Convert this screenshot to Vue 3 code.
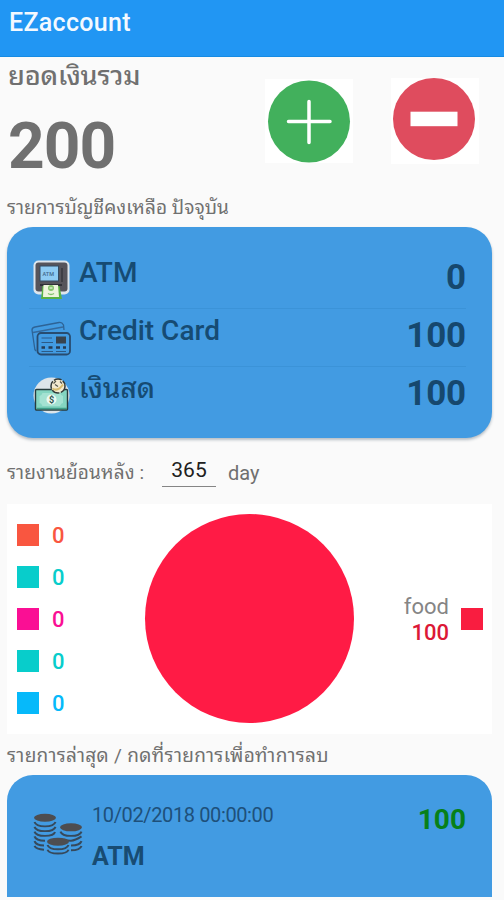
<script setup>
import { ref } from 'vue'

const total = ref(200)
const days = ref('365')

const accounts = ref([
  { icon: 'atm', name: 'ATM', amount: 0 },
  { icon: 'card', name: 'Credit Card', amount: 100 },
  { icon: 'cash', name: 'เงินสด', amount: 100 },
])

const legend = ['tomato', 'turquoise', 'pink', 'turquoise', 'sky']
</script>

<template>
  <div class="page">
    <header class="toolbar">
      <h1>EZaccount</h1>
    </header>

    <section class="summary">
      <div class="total">
        <div class="total-label">ยอดเงินรวม</div>
        <div class="total-value">{{ total }}</div>
      </div>
      <button class="round-btn add">
        <svg viewBox="0 0 88 84" width="88" height="84">
          <rect width="88" height="84" fill="#fff" />
          <circle cx="44" cy="42.5" r="41" fill="#42b05c" />
          <path d="M23.5 42.5H65M44 22.5V63.5" stroke="#fff" stroke-width="3.5" stroke-linecap="round" />
        </svg>
      </button>
      <button class="round-btn remove">
        <svg viewBox="0 0 88 86" width="88" height="86">
          <rect width="88" height="86" fill="#fff" />
          <circle cx="43" cy="41" r="41" fill="#df4c5e" />
          <rect x="19.5" y="33.7" width="47" height="14.5" fill="#fff" />
        </svg>
      </button>
    </section>

    <div class="caption">
      <span class="caption-accounts">รายการบัญชีคงเหลือ ปัจจุบัน</span>
    </div>

    <section class="card accounts">
      <div v-for="a in accounts" :key="a.name" class="account">
        <svg v-if="a.icon === 'atm'" class="icon" viewBox="0 0 40 42">
          <rect x="2.5" y="2.5" width="36" height="34" rx="5" fill="#dde5ec" />
          <rect x="4.5" y="4.5" width="32" height="29" rx="3" fill="#56545b" />
          <rect x="9" y="8" width="18.5" height="15" fill="#8ecbf3" stroke="#344b62" />
          <text x="11.5" y="17.5" font-size="5.5" font-weight="500" fill="#42688a">ATM</text>
          <path d="M31 10V24" stroke="#3e3e45" stroke-width="2" />
          <path d="M9 27H31" stroke="#2f3038" stroke-width="2" />
          <path d="M11.5 28H28.5L31 41H10Z" fill="#5ab243" />
          <path d="M12.5 27H27L28 39H12Z" fill="#edf4dc" />
          <circle cx="20" cy="30" r="3" fill="#84c36c" />
          <path d="M18.5 30H21.5" stroke="#fff" stroke-width="1" />
          <path d="M17 35.5Q20 37.5 23 35.500" stroke="#84c36c" stroke-width="1.5" fill="none" />
        </svg>
        <svg v-else-if="a.icon === 'card'" class="icon" viewBox="0 0 40 42" fill="none">
          <path d="M5 35Q3.5 34 3.5 31L1 14Q1 11.5 4 11L28 6.5Q31 6 32.5 9L33 14" stroke="#2d6396" stroke-width="1.3" />
          <path d="M2 16.5L32 11" stroke="#34699c" stroke-width="1.5" />
          <rect x="6.5" y="17" width="32.5" height="21.5" rx="3.5" fill="#429be2" stroke="#284c70" stroke-width="1.8" />
          <rect x="25" y="20.5" width="10" height="7" fill="#38434e" />
          <path d="M10.5 22H21M10.5 26.5H22M10.5 35.5H22M25 35.5H35" stroke="#2c5b87" stroke-width="1.2" />
          <path d="M10.5 31.5H14M17.5 31.5H21.5M25 31.5H29M32 31.5H35" stroke="#263b53" stroke-width="2.5" />
        </svg>
        <svg v-else class="icon" viewBox="0 0 40 42">
          <circle cx="20.5" cy="21.5" r="18" fill="#dde5ea" />
          <rect x="4.5" y="15.5" width="32" height="20.5" rx="1" fill="#84d5c1" stroke="#273c3e" stroke-width="1.4" />
          <path d="M5.5 34.5H36" stroke="#40a089" stroke-width="1.5" />
          <path d="M11.5 19H29Q30 22 32 22V29Q30 29 29 32H11.5Q10.5 29 8.5 29V22Q10.5 22 11.5 19Z" fill="#a4e2d2" />
          <circle cx="20.500" cy="25.5" r="5" fill="#edf8ef" />
          <text x="18" y="29" font-size="9" font-weight="700" fill="#2b5552">$</text>
          <circle cx="27" cy="12" r="7" fill="#f4ead0" stroke="#333a38" stroke-width="1.5" stroke-dasharray="8 1.5" />
          <path d="M21.5 14.5Q27 18 32 10.500" fill="none" stroke="#d7bd70" stroke-width="2" />
          <path d="M22.5 9.5L25 7M24 10.5L27 12.5M29 7.5L31 9.5" fill="none" stroke="#55564c" stroke-width="1.2" />
        </svg>
        <span class="account-name">{{ a.name }}</span>
        <span class="account-amount">{{ a.amount }}</span>
      </div>
    </section>

    <section class="range">
      <span class="range-label">รายงานย้อนหลัง :</span>
      <input v-model="days" class="range-input">
      <span class="range-unit">day</span>
    </section>

    <section class="chart">
      <ul class="legend">
        <li v-for="(color, i) in legend" :key="i" :class="color">
          <i class="swatch"></i>
          <span>0</span>
        </li>
      </ul>
      <div class="pie"></div>
      <div class="slice">
        <div class="slice-text">
          <span class="slice-name">food</span>
          <span class="slice-value">100</span>
        </div>
        <i class="swatch"></i>
      </div>
    </section>

    <div class="caption">
      <span class="caption-recent">รายการล่าสุด / กดที่รายการเพื่อทำการลบ</span>
    </div>

    <section class="card recent">
      <svg class="coins" viewBox="0 0 50 44" width="50" height="42" preserveAspectRatio="none" fill="none">
        <g stroke="#36495b" stroke-width="2">
          <path d="M1.5 9.5Q3 14 12 14T22.5 9.5M1.5 14.5Q3 19 12 19T22.5 14.5M1.5 19.5Q3 24 12 24T22 20M1.5 24.5Q3 29 12 29M1.5 29.5Q3 34 11 34M1.5 34.5Q3 38 11 38.5" />
          <path d="M27.5 19.5Q29 24 38 24T48.5 19.5M31 28Q34 29 38 29T48.5 24.5M38 34Q47 34 48.5 29.5M38 39Q47 39 48.5 34.5" />
          <path d="M14.5 33.5Q16 38 25 38T35.5 33.5M14.5 38.5Q16 42.5 25 42.5T35.5 38.5" />
        </g>
        <g fill="#4d4d50">
          <ellipse cx="12" cy="5" rx="11" ry="4.2" />
          <ellipse cx="38" cy="15" rx="11" ry="4.2" />
          <ellipse cx="25" cy="30" rx="11" ry="4.2" />
        </g>
      </svg>
      <div class="entry">
        <span class="entry-date">10/02/2018 00:00:00</span>
        <span class="entry-name">ATM</span>
      </div>
      <span class="entry-amount">100</span>
    </section>
  </div>
</template>

<style>
body {
  margin: 0;
  background-color: #fafafa;
}
</style>

<style scoped>
.page {
  width: 504px;
  height: 900px;
  overflow: hidden;
  background-color: #fafafa;
  color: #707070;
  font-family: Roboto, "Noto Sans Thai Looped", "Droid Sans Thai", Loma, Waree, Garuda, "Noto Sans", sans-serif;
}

.toolbar {
  box-sizing: border-box;
  height: 57px;
  padding: 8px 9px;
  background-color: #2196f3;
  border-bottom: 1px solid #168be3;
}

.toolbar h1 {
  margin: 0;
  color: #f3f9ff;
  font-size: 25px;
  font-weight: 500;
  letter-spacing: 0.3px;
  line-height: 30px;
}

.summary {
  display: flex;
  align-items: flex-start;
  height: 137px;
}

.total {
  width: 257px;
  padding-left: 8px;
}

.total-label {
  height: 44px;
  font-size: 27px;
  font-weight: 500;
  letter-spacing: -0.15px;
  line-height: 38px;
  white-space: nowrap;
}

.total-value {
  font-size: 64px;
  font-weight: 700;
  letter-spacing: -1px;
  line-height: 92px;
}

.round-btn {
  margin: 22px 0 0;
  padding: 0;
  border: 0;
  background: none;
  line-height: 0;
  cursor: pointer;
}

.round-btn.remove {
  margin-left: 38px;
  margin-top: 21px;
}

.caption {
  height: 33px;
  padding-left: 7px;
  font-size: 19px;
  line-height: 28px;
  white-space: nowrap;
}

.caption-accounts {
  letter-spacing: 0.07px;
}

.caption-recent {
  letter-spacing: 0.33px;
}

.card {
  box-sizing: border-box;
  margin: 0 12px 0 7px;
  background-color: #429be2;
}

.accounts {
  height: 211px;
  padding: 24px 26px 0 22px;
  border-radius: 26px;
  box-shadow: 0 2px 3px #b5bdc4;
}

.account {
  display: flex;
  box-sizing: border-box;
  height: 58px;
  border-bottom: 1px solid #3b93d8;
}

.account:last-child {
  border-bottom: 0;
}

.icon {
  width: 40px;
  height: 42px;
  margin: 7px 0 0 2px;
}

.account-name {
  flex: 1;
  margin-left: 8px;
  color: #164b73;
  font-size: 28px;
  font-weight: 500;
  line-height: 44px;
  white-space: nowrap;
}

.account-amount {
  color: #16486e;
  font-size: 35px;
  font-weight: 700;
  letter-spacing: -0.2px;
  line-height: 54px;
}

.range {
  display: flex;
  height: 66px;
  padding-left: 7px;
  font-size: 20px;
  line-height: 70px;
  white-space: nowrap;
}

.range-label {
  width: 155px;
  font-size: 19px;
  letter-spacing: 0.12px;
}

.range-input {
  box-sizing: border-box;
  width: 54px;
  height: 33px;
  margin-top: 16px;
  padding: 0;
  border: 0;
  border-bottom: 1px solid #858585;
  outline: 0;
  background: none;
  color: #202020;
  font-family: Roboto, sans-serif;
  font-size: 21px;
  text-align: center;
}

.range-unit {
  margin-left: 12px;
}

.chart {
  display: flex;
  box-sizing: border-box;
  height: 230px;
  margin: 0 12px 8px 7px;
  background-color: #fff;
}

.legend {
  width: 128px;
  margin: 0;
  padding: 10px 0 0 10px;
  list-style: none;
}

.legend li {
  display: flex;
  align-items: center;
  height: 42px;
  font-size: 22px;
  font-weight: 500;
}

.legend span {
  margin-left: 13px;
}

.swatch {
  width: 22px;
  height: 22px;
  background-color: currentColor;
}

.tomato {
  color: #f95640;
}

.turquoise {
  color: #08cdcb;
}

.pink {
  color: #fa0f94;
}

.sky {
  color: #06b9fa;
}

.pie {
  width: 209px;
  height: 209px;
  margin-top: 10px;
  border-radius: 50%;
  background-color: #ff1b45;
}

.slice {
  display: flex;
  flex: 1;
  align-items: center;
  justify-content: flex-end;
  padding-right: 9px;
  color: #f91d40;
}

.slice-text {
  display: flex;
  flex-direction: column;
  align-items: flex-end;
  margin-top: 2px;
  margin-right: 12px;
  line-height: 26px;
}

.slice-name {
  color: #858585;
  font-size: 22px;
}

.slice-value {
  color: #dc1836;
  font-size: 22px;
  font-weight: 500;
}

.recent {
  display: flex;
  height: 122px;
  padding: 0 26px;
  border-radius: 26px 26px 0 0;
}

.coins {
  margin-top: 38px;
}

.entry {
  display: flex;
  flex: 1;
  flex-direction: column;
  margin-left: 9px;
  padding-top: 25px;
  color: #1e507a;
}

.entry-date {
  height: 42px;
  font-size: 20px;
  letter-spacing: -0.38px;
  line-height: 30px;
}

.entry-name {
  color: #184c73;
  font-size: 25px;
  font-weight: 700;
  line-height: 30px;
}

.entry-amount {
  margin-top: 29px;
  color: #078018;
  font-size: 28px;
  font-weight: 700;
  line-height: 32px;
}
</style>
